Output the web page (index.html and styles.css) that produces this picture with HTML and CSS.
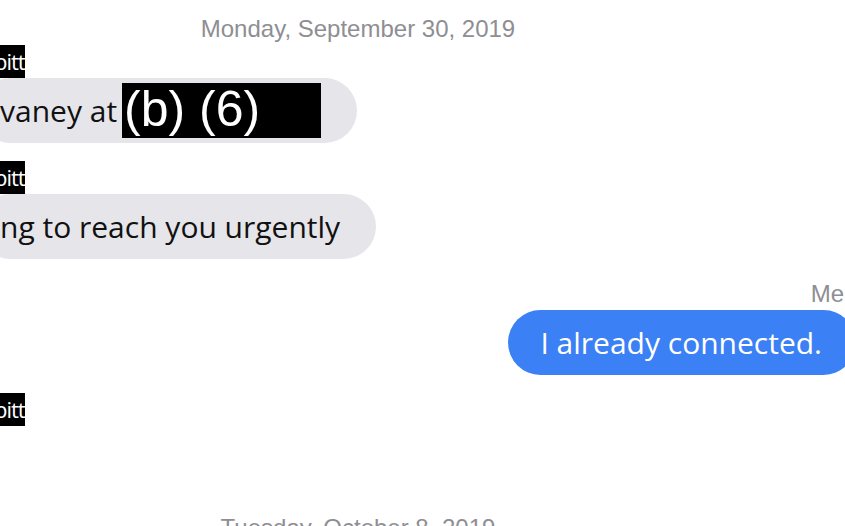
FILE: index.html
```html
<!DOCTYPE html>
<html lang="en">
<head>
  <meta charset="UTF-8" />
  <meta name="viewport" content="width=device-width, initial-scale=1.0" />
  <title>Messages</title>
  <link rel="stylesheet" href="styles.css">
</head>
<body>
  <div class="thread">
    <div class="fecha">Monday, September 30, 2019</div>

    <!-- entrantes -->
    <div class="grupo entrante">
      <div class="remitente">pitt</div>
      <div class="burbuja gris">vaney at <span class="tachado">(b) (6)</span></div>
    </div>

    <div class="grupo entrante">
      <div class="remitente">pitt</div>
      <div class="burbuja gris">ng to reach you urgently</div>
    </div>

    <!-- saliente -->
    <div class="grupo saliente">
      <div class="yo">Me</div>
      <div class="burbuja azul">I already connected.</div>
    </div>

    <div class="grupo entrante">
      <div class="remitente">pitt</div>
      <div class="burbuja vacia"></div>
    </div>

    <div class="fecha fecha-abajo">Tuesday, October 8, 2019</div>
  </div>
</body>
</html>
```

FILE: styles.css
```css
body {
  margin: 0;
  background: #fff;
  overflow: hidden;
  font-family: 'Open Sans', 'Noto Sans', sans-serif;
}

.thread {
  width: 1000px;
  margin-left: -142px;
  padding-top: 15px;
  display: flex;
  flex-direction: column;
}

.fecha {
  font-family: 'Liberation Sans', Arial, sans-serif;
  font-size: 24px;
  line-height: 28px;
  color: #8e8e93;
  text-align: center;
  margin-bottom: 2px;
}

.fecha-abajo {
  margin-top: 5px;
}

.grupo {
  display: flex;
  flex-direction: column;
  margin-bottom: 18px;
}

.entrante {
  align-items: flex-start;
  margin-left: 120px;
}

.saliente {
  align-items: flex-end;
  margin-right: 2px;
}

.remitente {
  height: 33px;
  line-height: 33px;
  background: #000;
  color: #fff;
  font-size: 22px;
  padding-left: 16px;
  letter-spacing: -1px;
}

.yo {
  height: 33px;
  font-family: 'Liberation Sans', Arial, sans-serif;
  font-size: 24px;
  line-height: 28px;
  color: #8e8e93;
  padding-right: 12px;
  box-sizing: border-box;
  padding-top: 3px;
}

.burbuja {
  height: 65px;
  display: flex;
  align-items: center;
  border-radius: 33px;
  font-size: 30px;
  box-sizing: border-box;
  white-space: nowrap;
}

.gris {
  background: #e5e5ea;
  color: #111;
  padding: 0 36px 0 22px;
}

.azul {
  background: #3b80f4;
  color: #fff;
  padding: 0 34px 0 32px;
}

.vacia {
  background: transparent;
}

.tachado {
  display: inline-block;
  margin-left: 5px;
  width: 199px;
  height: 55px;
  background: #000;
  color: #fff;
  font-family: 'Liberation Sans', Arial, sans-serif;
  font-size: 50px;
  line-height: 52px;
  padding-left: 2px;
  box-sizing: border-box;
}
```
